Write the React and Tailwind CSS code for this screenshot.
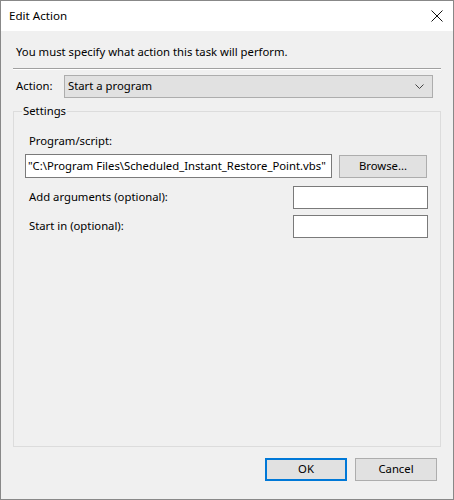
import React from 'react';

const font = { fontFamily: '"Noto Sans", "Segoe UI", sans-serif' };

const Field = ({ className }) => (
  <div className={'h-[23px] bg-white border border-[#7a7a7a] ' + className}></div>
);

export default function App() {
  return (
    <div className="w-[454px] h-[500px] border border-[#888888] flex flex-col bg-[#f0f0f0] text-[11.3px] text-black whitespace-nowrap" style={font}>
      {/* title bar */}
      <div className="h-[30px] bg-white flex items-center justify-between pl-[8px] pr-[10px]">
        <span className="text-[11.6px]">Edit Action</span>
        <svg width="12" height="12" viewBox="0 0 12 12" stroke="#111" strokeWidth="1">
          <path d="M0.5 0.5 L11.5 11.5 M11.5 0.5 L0.5 11.5" />
        </svg>
      </div>

      <div className="flex-1 flex flex-col px-[12px]">
        <p className="pt-[13px] pl-[3px] leading-[16px]">You must specify what action this task will perform.</p>
        <div className="mt-[8px] border-t border-[#a0a0a0] border-b border-b-white"></div>

        <div className="mt-[5px] flex items-center pl-[3px] pr-[8px]">
          <span className="w-[48px]">Action:</span>
          <div className="flex-1 h-[23px] bg-[#e1e1e1] border border-[#adadad] flex items-center justify-between pl-[3px] pr-[8px]">
            <span>Start a program</span>
            <svg width="9" height="6" viewBox="0 0 9 6" fill="none" stroke="#444" strokeWidth="1">
              <path d="M0.5 0.5 L4.5 4.5 L8.5 0.5" />
            </svg>
          </div>
        </div>

        {/* settings group */}
        <div className="relative mt-[13px] h-[336px] border border-[#dcdcdc] px-[12px] pt-[21px]">
          <span className="absolute -top-[9px] left-[8px] px-[1px] bg-[#f0f0f0] leading-[16px]">Settings</span>

          <div className="pl-[3px] leading-[16px]">Program/script:</div>
          <div className="mt-[5px] flex items-start">
            <div className="w-[307px] h-[24px] bg-white border border-[#7a7a7a] flex items-center pl-[2px] -ml-[1px]">
              "C:\Program Files\Scheduled_Instant_Restore_Point.vbs"
            </div>
            <button className="ml-[7px] mt-[1px] w-[88px] h-[23px] bg-[#e1e1e1] border border-[#adadad]">Browse...</button>
          </div>

          <div className="mt-[8px] flex items-center justify-between">
            <span className="pl-[3px]">Add arguments (optional):</span>
            <Field className="w-[135px]" />
          </div>
          <div className="mt-[6px] flex items-center justify-between">
            <span className="pl-[3px]">Start in (optional):</span>
            <Field className="w-[135px]" />
          </div>
        </div>

        <div className="mt-[11px] flex justify-end gap-[8px] pr-[4px]">
          <button className="w-[82px] h-[23px] bg-[#e1e1e1] border-2 border-[#0078d7]">OK</button>
          <button className="w-[82px] h-[23px] bg-[#e1e1e1] border border-[#adadad]">Cancel</button>
        </div>
      </div>
    </div>
  );
}
